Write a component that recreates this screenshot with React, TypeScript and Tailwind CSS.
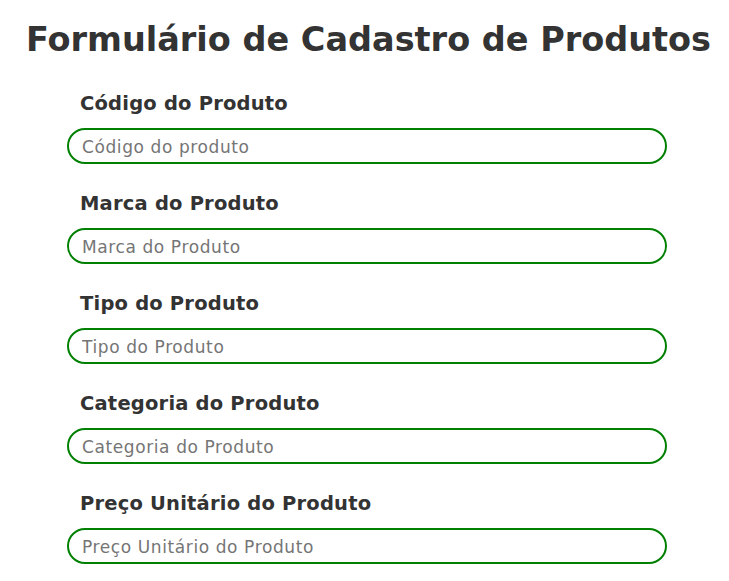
import React, { useState, ChangeEvent } from "react";

const fields = [
    { name: "codigo", label: "Código do Produto", placeholder: "Código do produto" },
    { name: "marca", label: "Marca do Produto", placeholder: "Marca do Produto" },
    { name: "tipo", label: "Tipo do Produto", placeholder: "Tipo do Produto" },
    { name: "categoria", label: "Categoria do Produto", placeholder: "Categoria do Produto" },
    { name: "preco", label: "Preço Unitário do Produto", placeholder: "Preço Unitário do Produto" },
];

const App = () => {
    const [formData, setFormData] = useState<Record<string, string>>({
        codigo: "",
        marca: "",
        tipo: "",
        categoria: "",
        preco: "",
    });

    const handleChange = (e: ChangeEvent<HTMLInputElement>) => {
        setFormData({ ...formData, [e.target.name]: e.target.value });
    };

    return (
        <div className="min-h-screen bg-white font-['DejaVu_Sans',sans-serif] text-[#333333]">
            <h1 className="pl-[8px] pt-[20px] text-center text-[33.5px] leading-[40px] font-bold">
                Formulário de Cadastro de Produtos
            </h1>
            <form className="ml-[67px] mt-[31px] w-[600px]">
                {fields.map((field) => (
                    <div key={field.name} className="mb-[27px] flex flex-col">
                        <label
                            htmlFor={field.name}
                            className="pl-[13px] pt-[1px] text-[19.5px] leading-[24px] tracking-[0.2px] font-bold"
                        >
                            {field.label}
                        </label>
                        <input
                            id={field.name}
                            type="text"
                            name={field.name}
                            value={formData[field.name]}
                            onChange={handleChange}
                            placeholder={field.placeholder}
                            className="mt-[12px] h-[36px] rounded-full border-2 border-[#008000] px-[13px] pt-[1px] text-[17px] tracking-[0.6px] outline-none placeholder:text-[#757575]"
                        />
                    </div>
                ))}
            </form>
        </div>
    );
};

export default App;
